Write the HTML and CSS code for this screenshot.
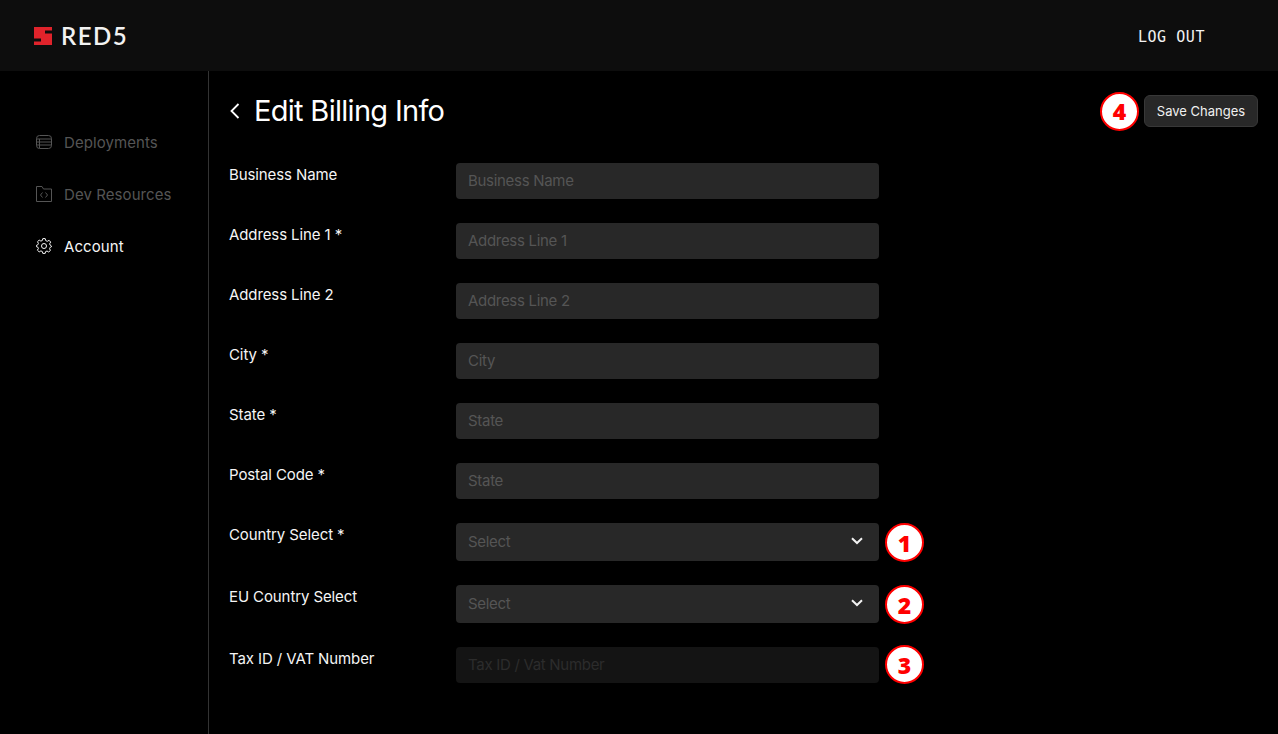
FILE: index.html
```html
<!DOCTYPE html>
<html lang="en">
<head>
<meta charset="utf-8">
<title>Edit Billing Info</title>
<link rel="stylesheet" href="styles.css">
</head>
<body>
<header class="topbar">
  <a class="brand">
    <svg class="brand-mark" viewBox="0 0 18 18" width="18" height="18"><path fill="#e0232b" d="M0 0H18V3.500H11V6.500H18V18H0V14.500H7V11.500H0Z"/></svg>
    <span class="brand-name">RED5</span>
  </a>
  <a class="logout">LOG OUT</a>
</header>
<div class="shell">
  <nav class="sidebar">
    <a class="nav-item">
      <svg class="nav-icon" viewBox="0 0 16 16"><path d="M3.500 1.500H12.500Q15.500 1.500 15.500 4.500V11.500Q15.500 14.500 12.500 14.500H3.500Q.5 14.500 .5 11.500V4.500Q.5 1.500 3.500 1.500ZM.5 5H15.500M.5 8H15.500M.5 11H15.500M3.500 5V14"/></svg>
      <span>Deployments</span>
    </a>
    <a class="nav-item">
      <svg class="nav-icon" viewBox="0 0 16 16"><path d="M.5 .5H6L7.500 3H15.500V15.500H.5ZM6.500 6.500L4.500 9L6.500 11.500M9.500 6.500L11.500 9L9.500 11.500"/></svg>
      <span>Dev Resources</span>
    </a>
    <a class="nav-item active">
      <svg class="nav-icon" viewBox="0 0 16 16"><circle cx="8" cy="8" r="2.500"/><path d="M6.800 .6H9.200L9.700 2.600L11.300 3.300L13.100 2.300L14.700 4.100L13.600 5.800L14.200 7.200L15.500 8L15.500 8.700L14.200 9.300L13.600 10.600L14.400 12.500L12.700 14L11 13L9.600 13.600L9.200 15.400H6.800L6.300 13.500L4.900 12.900L3.200 13.900L1.400 12.200L2.400 10.500L1.800 9.100L.5 8.700V7.300L1.800 6.800L2.400 5.400L1.500 3.700L3.200 2.100L4.900 3.100L6.300 2.500Z"/></svg>
      <span>Account</span>
    </a>
  </nav>
  <main class="content">
    <div class="page-head">
      <div class="title-wrap">
        <svg class="back" viewBox="0 0 10 16" width="10" height="16"><path d="M8.500 1L1.500 8L8.500 15"/></svg>
        <h1>Edit Billing Info</h1>
      </div>
      <div class="actions">
        <span class="badge badge-save">4</span>
        <button class="save">Save Changes</button>
      </div>
    </div>
    <form class="form">
      <div class="row"><label>Business Name</label><div class="field"><div class="control">Business Name</div></div></div>
      <div class="row"><label>Address Line 1 *</label><div class="field"><div class="control">Address Line 1</div></div></div>
      <div class="row"><label>Address Line 2</label><div class="field"><div class="control">Address Line 2</div></div></div>
      <div class="row"><label>City *</label><div class="field"><div class="control">City</div></div></div>
      <div class="row"><label>State *</label><div class="field"><div class="control">State</div></div></div>
      <div class="row"><label>Postal Code *</label><div class="field"><div class="control">State</div></div></div>
      <div class="row"><label>Country Select *</label><div class="field"><div class="control select">Select<svg class="chev" viewBox="0 0 12 8" width="12" height="8"><path d="M1 1.200L6 6L11 1.200"/></svg></div><span class="badge">1</span></div></div>
      <div class="row"><label>EU Country Select</label><div class="field"><div class="control select">Select<svg class="chev" viewBox="0 0 12 8" width="12" height="8"><path d="M1 1.200L6 6L11 1.200"/></svg></div><span class="badge">2</span></div></div>
      <div class="row"><label>Tax ID / VAT Number</label><div class="field"><div class="control disabled">Tax ID / Vat Number</div><span class="badge badge-tax">3</span></div></div>
    </form>
  </main>
</div>
</body>
</html>
```
FILE: styles.css
```css
* { box-sizing: border-box; }
html, body { height: 100%; }
body {
  margin: 0;
  background: #000;
  color: #fff;
  font-family: Inter, "Liberation Sans", sans-serif;
  font-size: 15px;
  overflow: hidden;
}
.topbar {
  height: 71px;
  background: #0d0d0d;
  display: flex;
  align-items: center;
  justify-content: space-between;
  padding: 0 73px 0 34px;
}
.brand { display: flex; align-items: center; gap: 9px; }
.brand-mark { display: block; }
.brand-name {
  font-family: Lato, sans-serif;
  font-size: 24px;
  font-weight: 600;
  letter-spacing: 1.500px;
  color: #f2f2f2;
  line-height: 24px;
}
.logout {
  font-family: "DejaVu Sans Mono", monospace;
  font-size: 15px;
  letter-spacing: .55px;
  color: #f2f2f2;
  padding-top: 2px;
}
.shell { display: flex; height: 663px; }
.sidebar {
  width: 209px;
  flex: none;
  border-right: 1px solid #333;
  padding-top: 61px;
  display: flex;
  flex-direction: column;
  gap: 32px;
}
.nav-item {
  display: flex;
  align-items: center;
  height: 20px;
  padding-left: 36px;
  gap: 12px;
  color: #555;
  letter-spacing: .08px;
}
.nav-item.active { color: #f5f5f5; }
.nav-icon {
  width: 16px;
  height: 16px;
  fill: none;
  stroke: currentColor;
  stroke-width: 1;
}
.content { flex: 1; padding: 0 20px; }
.page-head {
  display: flex;
  justify-content: space-between;
  align-items: center;
  height: 80px;
  margin-bottom: 12px;
}
.title-wrap { display: flex; align-items: center; gap: 14px; }
.back { fill: none; stroke: #fff; stroke-width: 1.800; margin-left: 1px; }
h1 {
  margin: 0;
  font-size: 29px;
  font-weight: 400;
  letter-spacing: -.7px;
  line-height: 40px;
}
.actions { display: flex; align-items: center; gap: 5px; }
.save {
  width: 114px;
  height: 32px;
  border-radius: 6px;
  border: 1px solid #383838;
  background: #282828;
  color: #f0f0f0;
  font: 13px Inter, sans-serif;
  padding: 0;
}
.form { display: flex; flex-direction: column; gap: 24px; }
.row { display: flex; align-items: flex-start; }
.row label {
  width: 227px;
  flex: none;
  line-height: 24px;
  color: #f5f5f5;
  letter-spacing: -.1px;
}
.field { position: relative; width: 423px; }
.control {
  height: 36px;
  background: #282828;
  border-radius: 4px;
  padding: 0 12px 2px;
  display: flex;
  align-items: center;
  color: #555;
  letter-spacing: -.3px;
}
.control.select { height: 38px; justify-content: space-between; }
.control.disabled { background: #141414; color: #2c2c2c; }
.chev { fill: none; stroke: #f2f2f2; stroke-width: 2; margin-right: 4px; }
.badge {
  width: 39px;
  height: 39px;
  border-radius: 50%;
  background: #fff;
  border: 2px solid #f00;
  color: #f00;
  font-family: "Open Sans", sans-serif;
  font-weight: 800;
  font-size: 23px;
  display: flex;
  align-items: center;
  justify-content: center;
}
.field .badge { position: absolute; left: 429px; top: 0; }
.field .badge-tax { top: -2px; }
```
